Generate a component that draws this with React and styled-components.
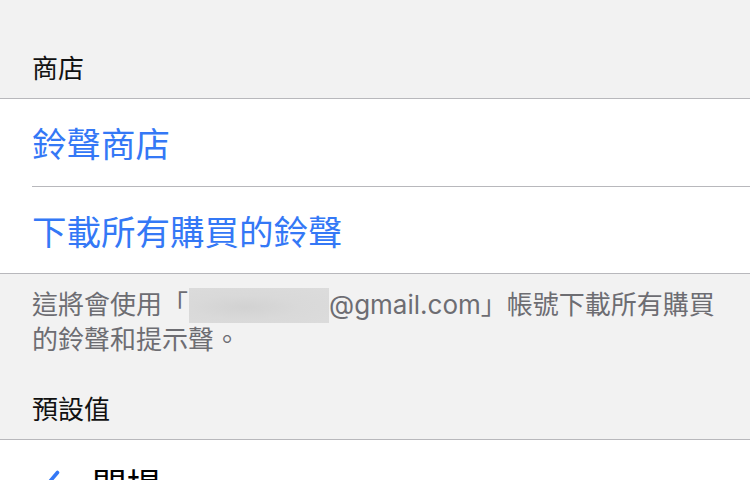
import styled, { createGlobalStyle } from 'styled-components';

const GlobalStyle = createGlobalStyle`
  html, body {
    margin: 0;
    padding: 0;
    background: #f2f2f2;
    height: 480px;
    overflow: hidden;
  }
  body {
    font-family: "Inter", "Noto Sans CJK TC", sans-serif;
    -webkit-font-smoothing: antialiased;
  }
`;

const Page = styled.div`
  display: flex;
  flex-direction: column;
  width: 750px;
`;

const SectionHeader = styled.div`
  padding: ${(props) => props.$top}px 32px 17px;
  font-size: 26px;
  line-height: 24px;
  color: #111;
`;

const Group = styled.div`
  background: #ffffff;
  border-top: 1px solid #b8b8bc;
  border-bottom: 1px solid #b8b8bc;
`;

const Cell = styled.div`
  display: flex;
  align-items: center;
  gap: 32px;
  height: 86.5px;
  padding-left: ${(props) => (props.$checked ? 30 : 32)}px;
  font-size: 34.5px;
  color: ${(props) => (props.$link ? '#3478f6' : '#000')};
`;

const Divider = styled.div`
  height: 1px;
  margin-left: 32px;
  background: #b8b8bc;
`;

const Footer = styled.div`
  padding: 14px 32px 0;
  font-size: 26px;
  line-height: 33px;
  color: #6d6d72;
`;

const Redacted = styled.span`
  display: inline-block;
  width: 140px;
  height: 35px;
  margin-left: 1px;
  vertical-align: -9px;
  background: radial-gradient(ellipse at 40% 55%, #d2d2d2 0%, #d9d9d9 45%, #dcdcdc 100%);
`;

const Check = () => (
  <svg width="30" height="26" viewBox="0 0 30 26" fill="none">
    <path
      d="M2.5 14 L10.5 22.5 L27.5 2.5"
      stroke="#3478f6"
      strokeWidth="3.6"
      strokeLinecap="round"
      strokeLinejoin="round"
    />
  </svg>
);

export default function App() {
  return (
    <>
      <GlobalStyle />
      <Page>
        <SectionHeader $top={57}>商店</SectionHeader>
        <Group>
          <Cell $link>鈴聲商店</Cell>
          <Divider />
          <Cell $link>下載所有購買的鈴聲</Cell>
        </Group>
        <Footer>
          這將會使用「<Redacted />@gmail.com」帳號下載所有購買的鈴聲和提示聲。
        </Footer>
        <SectionHeader $top={42}>預設值</SectionHeader>
        <Group>
          <Cell $checked>
            <Check />
            開場
          </Cell>
        </Group>
      </Page>
    </>
  );
}
